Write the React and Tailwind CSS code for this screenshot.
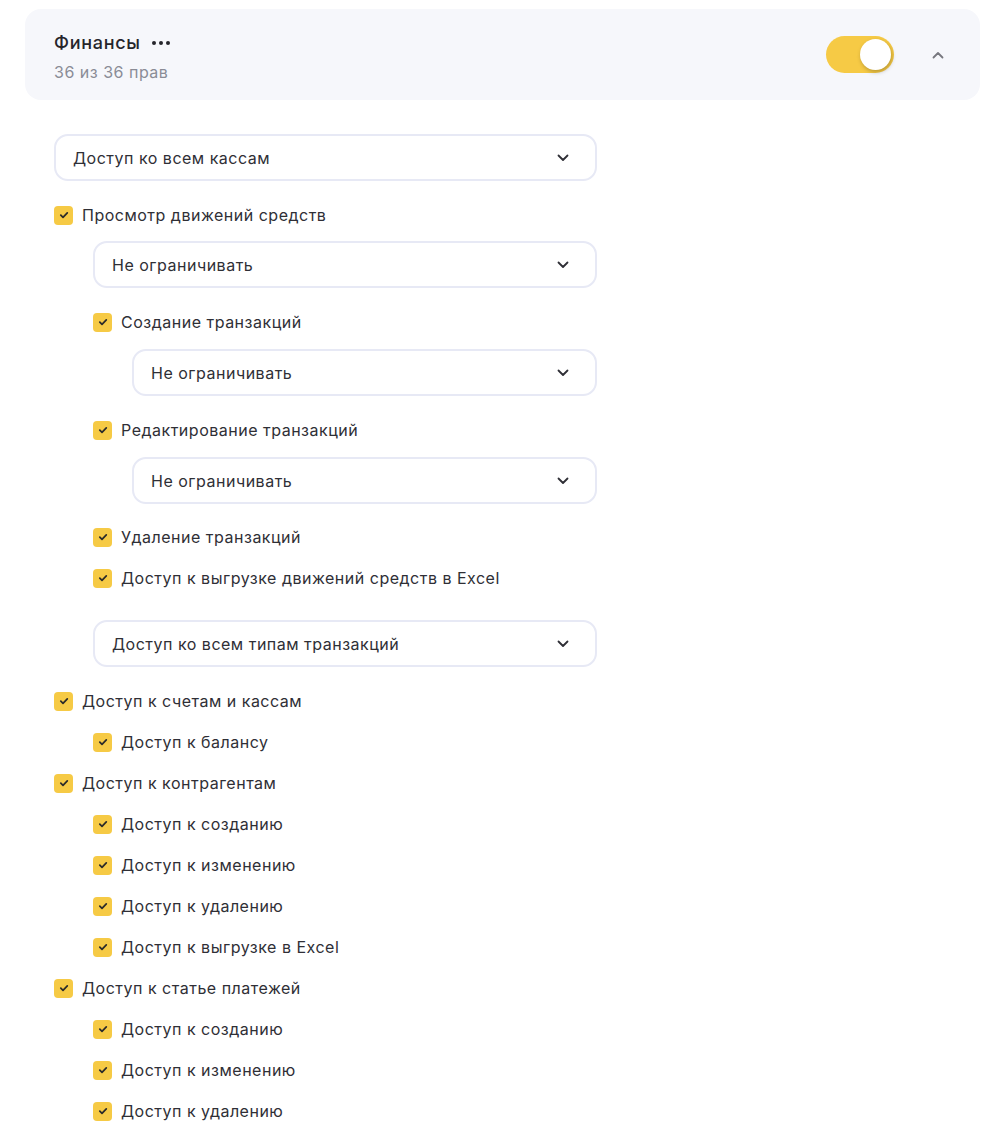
import React from "react";

const FONT = { fontFamily: "Inter, 'Noto Sans', sans-serif" };

// indent per level: 0 -> 54px, 1 -> 93px, 2 -> 132px
const INDENT = ["ml-0", "ml-[39px]", "ml-[78px]"];

const ITEMS = [
  { type: "select", level: 0, label: "Доступ ко всем кассам", mt: "mt-[34px]" },
  { type: "check", level: 0, label: "Просмотр движений средств", mt: "mt-[24px]" },
  { type: "select", level: 1, label: "Не ограничивать", mt: "mt-[16px]" },
  { type: "check", level: 1, label: "Создание транзакций", mt: "mt-[24px]" },
  { type: "select", level: 2, label: "Не ограничивать", mt: "mt-[17px]" },
  { type: "check", level: 1, label: "Редактирование транзакций", mt: "mt-[24px]" },
  { type: "select", level: 2, label: "Не ограничивать", mt: "mt-[17px]" },
  { type: "check", level: 1, label: "Удаление транзакций", mt: "mt-[23px]" },
  { type: "check", level: 1, label: "Доступ к выгрузке движений средств в Excel", mt: "mt-[21px]" },
  { type: "select", level: 1, label: "Доступ ко всем типам транзакций", mt: "mt-[32px]" },
  { type: "check", level: 0, label: "Доступ к счетам и кассам", mt: "mt-[24px]" },
  { type: "check", level: 1, label: "Доступ к балансу", mt: "mt-[21px]" },
  { type: "check", level: 0, label: "Доступ к контрагентам", mt: "mt-[21px]" },
  { type: "check", level: 1, label: "Доступ к созданию", mt: "mt-[21px]" },
  { type: "check", level: 1, label: "Доступ к изменению", mt: "mt-[21px]" },
  { type: "check", level: 1, label: "Доступ к удалению", mt: "mt-[21px]" },
  { type: "check", level: 1, label: "Доступ к выгрузке в Excel", mt: "mt-[21px]" },
  { type: "check", level: 0, label: "Доступ к статье платежей", mt: "mt-[21px]" },
  { type: "check", level: 1, label: "Доступ к созданию", mt: "mt-[21px]" },
  { type: "check", level: 1, label: "Доступ к изменению", mt: "mt-[21px]" },
  { type: "check", level: 1, label: "Доступ к удалению", mt: "mt-[21px]" },
];

function Chevron({ up = false, className = "" }) {
  return (
    <svg className={className} viewBox="0 0 12 8" fill="none" stroke="currentColor" strokeWidth={1.8} strokeLinecap="round" strokeLinejoin="round">
      <path d={up ? "M1.5 6.5L6 2l4.5 4.5" : "M1.5 1.5L6 6l4.5-4.5"} />
    </svg>
  );
}

function Select({ label, className }) {
  return (
    <div className={`${className} mr-auto flex h-[47px] items-center justify-between rounded-[14px] border-2 border-[#e7e9f5] bg-white pl-[17px] pr-[26px]`}>
      <span className="text-[16px] tracking-[0.5px] text-[#2f2f36]">{label}</span>
      <Chevron className="h-[8px] w-[12px] text-[#2f2f36]" />
    </div>
  );
}

function Check({ label, className }) {
  return (
    <label className={`${className} flex h-[20px] items-center gap-[9px]`}>
      <span className="flex h-[19px] w-[19px] shrink-0 items-center justify-center rounded-[4px] bg-[#f6ca45]">
        <svg className="h-[10px] w-[10px]" viewBox="0 0 10 10" fill="none" stroke="#2a2a2a" strokeWidth={1.7} strokeLinecap="round" strokeLinejoin="round">
          <path d="M1.8 5.2l2.2 2.2L8.3 2.8" />
        </svg>
      </span>
      <span className="text-[16px] tracking-[0.5px] text-[#2f2f36]">{label}</span>
    </label>
  );
}

export default function App() {
  return (
    <div style={FONT} className="min-h-[1135px] bg-white pl-[25px] pr-[20px] pt-[9px]">
      {/* Section header */}
      <div className="flex h-[91px] items-center justify-between rounded-[16px] bg-[#f6f7fb] pl-[29px] pr-[36px]">
        <div className="flex flex-col pt-[4px]">
          <div className="flex items-center gap-[11px]">
            <span className="text-[18px] font-medium tracking-[0.7px] text-[#25252b]">Финансы</span>
            <span className="flex items-center gap-[3px] pt-[1px]">
              <span className="h-[4px] w-[4px] rounded-full bg-[#25252b]" />
              <span className="h-[4px] w-[4px] rounded-full bg-[#25252b]" />
              <span className="h-[4px] w-[4px] rounded-full bg-[#25252b]" />
            </span>
          </div>
          <span className="mt-[4px] text-[16px] tracking-[0.5px] text-[#8a8c96]">36 из 36 прав</span>
        </div>
        <div className="flex items-center gap-[38px]">
          <div className="flex h-[37px] w-[68px] items-center justify-end rounded-full bg-[#f6ca45] pr-[3px]">
            <span className="h-[31px] w-[31px] rounded-full bg-white shadow-[1px_2px_4px_rgba(0,0,0,0.25)]" />
          </div>
          <Chevron up className="h-[8px] w-[12px] text-[#77787f]" />
        </div>
      </div>

      {/* Permissions */}
      <div className="flex flex-col pl-[29px]">
        {ITEMS.map((it, i) =>
          it.type === "select" ? (
            <Select key={i} label={it.label} className={`${it.mt} ${INDENT[it.level]} ${it.level === 0 ? "w-[543px]" : it.level === 1 ? "w-[504px]" : "w-[465px]"}`} />
          ) : (
            <Check key={i} label={it.label} className={`${it.mt} ${INDENT[it.level]}`} />
          )
        )}
      </div>
    </div>
  );
}
